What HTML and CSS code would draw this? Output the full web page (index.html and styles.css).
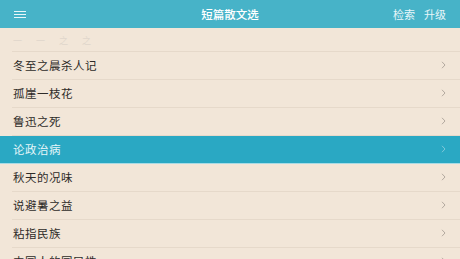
FILE: index.html
```html
<!DOCTYPE html>
<html lang="zh">
<head>
<meta charset="utf-8">
<link rel="stylesheet" href="styles.css">
</head>
<body>
<div class="app">
  <header class="bar">
    <div class="menu"><span></span><span></span><span></span></div>
    <div class="title">短篇散文选</div>
    <div class="actions"><span>检索</span><span>升级</span></div>
  </header>
  <ul class="list">
    <li class="row faded"><span class="label">一 一 之 之</span></li>
    <li class="row"><span class="label">冬至之晨杀人记</span><svg class="chev" viewBox="0 0 5 8"><path d="M1 0.8 L4 4 L1 7.2"/></svg></li>
    <li class="row"><span class="label">孤崖一枝花</span><svg class="chev" viewBox="0 0 5 8"><path d="M1 0.8 L4 4 L1 7.2"/></svg></li>
    <li class="row"><span class="label">鲁迅之死</span><svg class="chev" viewBox="0 0 5 8"><path d="M1 0.8 L4 4 L1 7.2"/></svg></li>
    <li class="row active"><span class="label">论政治病</span><svg class="chev" viewBox="0 0 5 8"><path d="M1 0.8 L4 4 L1 7.2"/></svg></li>
    <li class="row"><span class="label">秋天的况味</span><svg class="chev" viewBox="0 0 5 8"><path d="M1 0.8 L4 4 L1 7.2"/></svg></li>
    <li class="row"><span class="label">说避暑之益</span><svg class="chev" viewBox="0 0 5 8"><path d="M1 0.8 L4 4 L1 7.2"/></svg></li>
    <li class="row"><span class="label">粘指民族</span><svg class="chev" viewBox="0 0 5 8"><path d="M1 0.8 L4 4 L1 7.2"/></svg></li>
    <li class="row"><span class="label">中国人的国民性</span><svg class="chev" viewBox="0 0 5 8"><path d="M1 0.8 L4 4 L1 7.2"/></svg></li>
  </ul>
</div>
</body>
</html>
```

FILE: styles.css
```css
* { box-sizing: border-box; }
html, body { margin: 0; padding: 0; }
body {
  width: 460px;
  height: 259px;
  overflow: hidden;
  background: #f2e6d8;
  font-family: "Noto Sans CJK SC", "Noto Sans", sans-serif;
}
.app { display: flex; flex-direction: column; }
.bar {
  height: 28px;
  background: #47b3c8;
  display: flex;
  align-items: center;
  padding: 0 14px 0 14px;
  position: relative;
  color: #fff;
}
.menu {
  width: 12px;
  display: flex;
  flex-direction: column;
  gap: 2px;
}
.menu span {
  display: block;
  height: 1px;
  background: #eaf7fa;
}
.title {
  position: absolute;
  left: 0; right: 0;
  text-align: center;
  font-size: 11.5px;
  font-weight: 500;
  line-height: 28px;
  pointer-events: none;
}
.actions {
  margin-left: auto;
  display: flex;
  gap: 9px;
  font-size: 11px;
  color: #e8f6f9;
}
.list { list-style: none; margin: 0; padding: 0; }
.row {
  height: 28px;
  display: flex;
  align-items: center;
  padding: 0 14px 3px 13px;
  position: relative;
}
.row::after {
  content: "";
  position: absolute;
  left: 12px; right: 0; bottom: 0;
  height: 1px;
  background: #e6d9ca;
}
.row.faded { height: 24px; padding-bottom: 0; }
.row.faded .label { color: #e0d6cb; letter-spacing: 6px; font-size: 9px; }
.label {
  font-size: 11.5px;
  color: #2e2b28;
  letter-spacing: 0.5px;
}
.chev {
  margin-left: auto;
  width: 5px;
  height: 8px;
  fill: none;
  stroke: #b3a99f;
  stroke-width: 1;
}
.row.active {
  background: #2aa8c3;
}
.row.active::after { left: 0; background: #a9dbe5; }
.row.active .label { color: #e6f6f9; }
.row.active .chev { stroke: #7fc8d8; }
```
